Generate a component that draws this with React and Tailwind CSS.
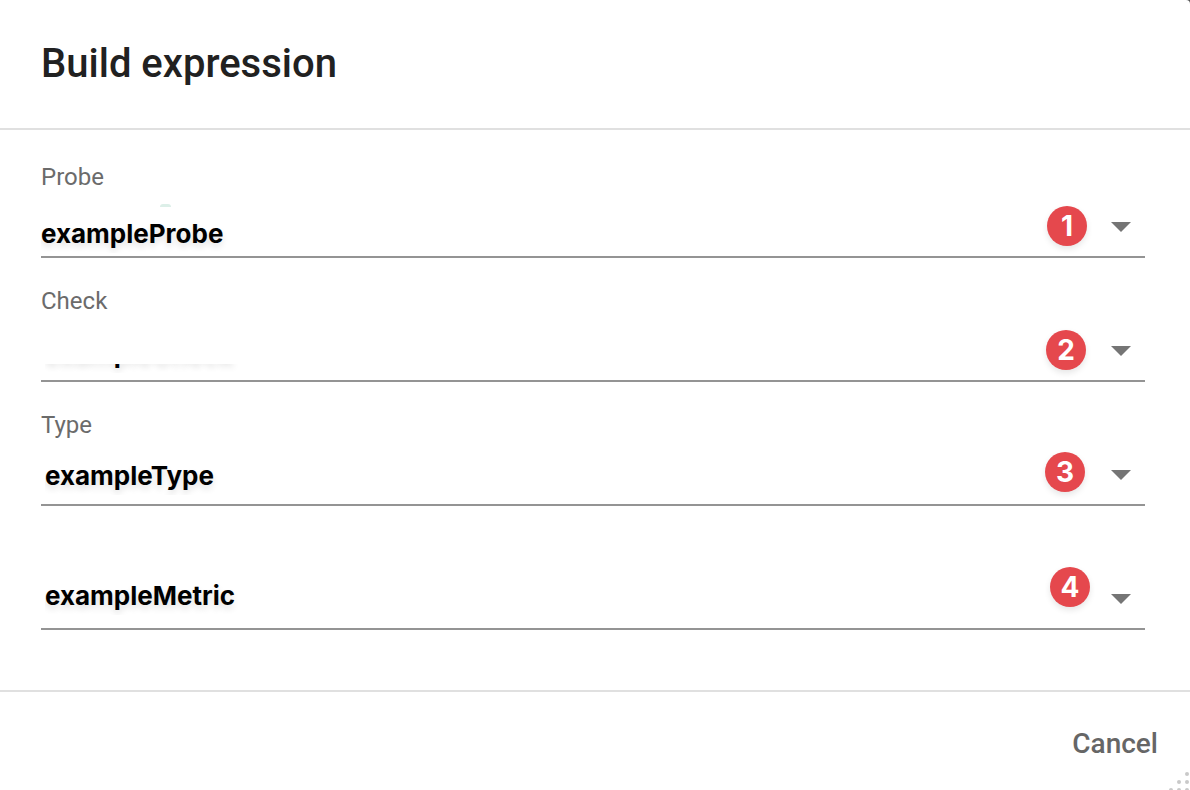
import React from "react";

const FIELDS = [
  { id: "probe", label: "Probe", value: "exampleProbe", select: "pt-4", badge: "right-[58px] bottom-[10px]" },
  { id: "check", label: "Check", value: "exampleCheck", select: "pt-2 pl-1 [clip-path:inset(46px_0_0_0)]", badge: "right-[59px] bottom-[10px]" },
  { id: "type", label: "Type", value: "exampleType", select: "pt-1 pl-1", badge: "right-[60px] bottom-[12px]" },
  { id: "metric", label: "", value: "exampleMetric", select: "pb-1 pl-1", badge: "right-[55px] bottom-[21px]" },
];

function Field({ field, step }) {
  return (
    <div>
      <div className="h-[33px]">
        {field.label && (
          <label htmlFor={field.id} className="block text-[24px] leading-8 text-[#6b6b6b]">
            {field.label}
          </label>
        )}
      </div>
      <div className="relative border-b-2 border-[#949494]">
        <select
          id={field.id}
          aria-label={field.label ? undefined : "Metric"}
          defaultValue={field.value}
          className={`block h-[62px] w-full appearance-none bg-transparent font-['Inter',sans-serif] text-[26px] font-bold text-black outline-none [text-shadow:0_4px_6px_rgba(0,0,0,0.12)] ${field.select}`}
        >
          <option>{field.value}</option>
        </select>
        {step === 1 && (
          <span className="pointer-events-none absolute top-[10px] left-[119px] h-[3px] w-[11px] rounded-t-full bg-[#dcefe8]" />
        )}
        <span
          className={`pointer-events-none absolute flex size-10 items-center justify-center rounded-full bg-[#e5484d] font-['Inter',sans-serif] text-[28px] leading-10 font-bold text-white shadow-[0_3px_6px_rgba(0,0,0,0.1)] ${field.badge}`}
        >
          {step}
        </span>
        <svg
          className="pointer-events-none absolute right-[14px] bottom-6 h-[10px] w-5"
          viewBox="0 0 20 10"
          aria-hidden="true"
        >
          <path d="M0 0h20L10 10z" fill="#757575" />
        </svg>
      </div>
    </div>
  );
}

export default function App() {
  return (
    <div className="min-h-screen bg-[#555] font-['Roboto',sans-serif]">
      <form className="relative flex min-h-screen flex-col overflow-hidden rounded-tr-[4px] bg-white">
        <header className="border-b-2 border-[#e0e0e0] px-[41px] py-10">
          <h1 className="text-[40px] leading-[48px] font-medium text-[#212121]">Build expression</h1>
        </header>
        <main className="flex grow flex-col gap-[27px] pt-[31px] pr-[45px] pb-[60px] pl-[41px]">
          {FIELDS.map((field, i) => (
            <Field key={field.id} field={field} step={i + 1} />
          ))}
        </main>
        <footer className="flex justify-end border-t-2 border-[#e0e0e0] px-8 pt-8 pb-[26px]">
          <button type="button" className="text-[28px] leading-10 font-medium text-[#666]">
            Cancel
          </button>
        </footer>
        <svg className="absolute right-0 bottom-0 h-5 w-6" viewBox="0 0 24 20" fill="#c9c9c9" aria-hidden="true">
          <circle cx="21" cy="4" r="2" />
          <circle cx="13" cy="12" r="2" />
          <circle cx="21" cy="12" r="2" />
          <circle cx="5" cy="20" r="2" />
          <circle cx="13" cy="20" r="2" />
          <circle cx="21" cy="20" r="2" />
        </svg>
      </form>
    </div>
  );
}
